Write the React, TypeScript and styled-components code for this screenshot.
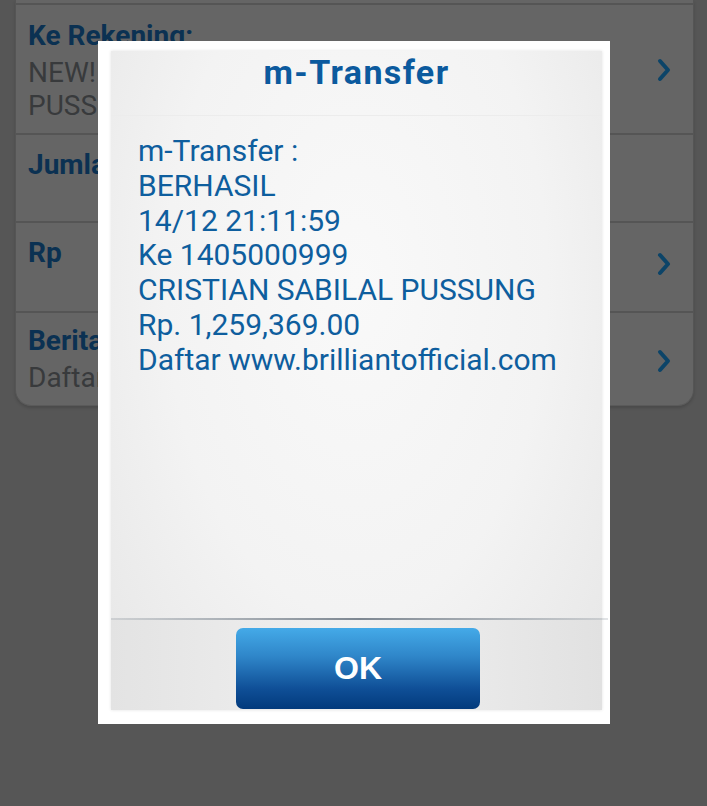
import React from "react";
import styled, { createGlobalStyle } from "styled-components";

const Global = createGlobalStyle`
  html, body {
    margin: 0;
    padding: 0;
    background: #565656;
    font-family: Roboto, "Noto Sans", Arial, sans-serif;
  }
  #root { min-height: 806px; }
`;

const Page = styled.div`
  position: relative;
  width: 707px;
  height: 806px;
  overflow: hidden;
  background: #565656;
  display: flex;
  flex-direction: column;
`;

const Card = styled.div`
  margin: 0 13px 0 15px;
  padding-top: 3px;
  background: #656565;
  border-left: 1px solid #555;
  border-right: 1px solid #555;
  border-bottom: 1px solid #5a5a5a;
  border-radius: 0 0 16px 16px;
  box-shadow: 0 2px 3px rgba(0, 0, 0, 0.15);
  display: flex;
  flex-direction: column;
`;

const Row = styled.div<{ $h: number }>`
  height: ${(p) => p.$h}px;
  border-top: 2px solid #555;
  box-sizing: border-box;
  display: flex;
  align-items: flex-start;
  justify-content: space-between;
  padding: 0 22px 0 12px;
  overflow: hidden;
`;

const RowText = styled.div<{ $pt: number }>`
  display: flex;
  flex-direction: column;
  padding-top: ${(p) => p.$pt}px;
`;

const Label = styled.div`
  font-weight: 700;
  font-size: 28px;
  line-height: 34px;
  color: #0b3152;
  margin-bottom: 3px;
`;

const Value = styled.div`
  font-size: 28px;
  line-height: 33px;
  color: #383a3c;
  white-space: nowrap;
`;

const Chevron = styled.svg<{ $mt: number }>`
  margin-top: ${(p) => p.$mt}px;
  width: 14px;
  height: 24px;
  flex: none;
`;

const Arrow = ({ mt }: { mt: number }) => (
  <Chevron $mt={mt} viewBox="0 0 14 24">
    <path d="M3 3 L11 12 L3 21" fill="none" stroke="#0c4468" strokeWidth="4" strokeLinecap="round" strokeLinejoin="round" />
  </Chevron>
);

const Dialog = styled.div`
  position: absolute;
  left: 98px;
  top: 41px;
  width: 512px;
  height: 683px;
  background: #ffffff;
  box-sizing: border-box;
  padding: 10px 8px 14px 13px;
  display: flex;
`;

const Panel = styled.div`
  flex: 1;
  display: flex;
  flex-direction: column;
  background: radial-gradient(ellipse at 50% 35%, #f9f9f9 0%, #f3f3f3 55%, #e6e6e6 100%);
  box-shadow: 0 0 3px rgba(0, 0, 0, 0.12);
`;

const Header = styled.div`
  height: 65px;
  flex: none;
  display: flex;
  align-items: center;
  justify-content: center;
  border-bottom: 1px solid #ececec;
  box-sizing: border-box;
`;

const Title = styled.div`
  font-weight: 700;
  font-size: 34px;
  letter-spacing: 1.4px;
  line-height: 40px;
  color: #0b5a9e;
  margin-bottom: 22px;
`;

const Body = styled.div`
  flex: 1;
  padding: 18px 10px 0 27px;
  color: #0e5e9e;
  font-size: 30px;
  line-height: 34.8px;
`;

const Line = styled.div`
  white-space: nowrap;
`;

const Footer = styled.div`
  height: 92px;
  flex: none;
  position: relative;
  display: flex;
  justify-content: center;
  align-items: flex-end;
  background: linear-gradient(90deg, #e3e3e3 0%, #f1f1f1 50%, #e1e1e1 100%);
  &::before {
    content: "";
    position: absolute;
    left: 0;
    right: -6px;
    top: 0;
    height: 2px;
    background: linear-gradient(90deg, rgba(140,150,160,0.25) 0%, #7d8791 50%, rgba(140,150,160,0.25) 100%);
  }
`;

const OkButton = styled.button`
  width: 244px;
  height: 81px;
  margin-left: 3px;
  margin-bottom: 1px;
  border: none;
  border-radius: 7px;
  background: linear-gradient(180deg, #44aae8 0%, #2f86c9 35%, #0f4f97 75%, #023a7c 100%);
  color: #ffffff;
  font-family: Arial, "Liberation Sans", sans-serif;
  font-weight: 700;
  font-size: 32px;
  padding: 0;
  padding-bottom: 1px;
`;

export default function App() {
  return (
    <Page>
      <Global />
      <Card>
        <Row $h={130}>
          <RowText $pt={14}>
            <Label>Ke Rekening:</Label>
            <Value>NEW! CRISTIAN SABILAL</Value>
            <Value>PUSSUNG</Value>
          </RowText>
          <Arrow mt={53} />
        </Row>
        <Row $h={88}>
          <RowText $pt={13}>
            <Label>Jumlah</Label>
          </RowText>
        </Row>
        <Row $h={90}>
          <RowText $pt={13}>
            <Label>Rp</Label>
          </RowText>
          <Arrow mt={29} />
        </Row>
        <Row $h={94}>
          <RowText $pt={11}>
            <Label>Berita</Label>
            <Value>Daftar www.brilliantofficial.com</Value>
          </RowText>
          <Arrow mt={36} />
        </Row>
      </Card>
      <Dialog>
        <Panel>
          <Header>
            <Title>m-Transfer</Title>
          </Header>
          <Body>
            <Line>m-Transfer :</Line>
            <Line>BERHASIL</Line>
            <Line>14/12 21:11:59</Line>
            <Line>Ke 1405000999</Line>
            <Line>CRISTIAN SABILAL PUSSUNG</Line>
            <Line>Rp. 1,259,369.00</Line>
            <Line>Daftar www.brilliantofficial.com</Line>
          </Body>
          <Footer>
            <OkButton>OK</OkButton>
          </Footer>
        </Panel>
      </Dialog>
    </Page>
  );
}
